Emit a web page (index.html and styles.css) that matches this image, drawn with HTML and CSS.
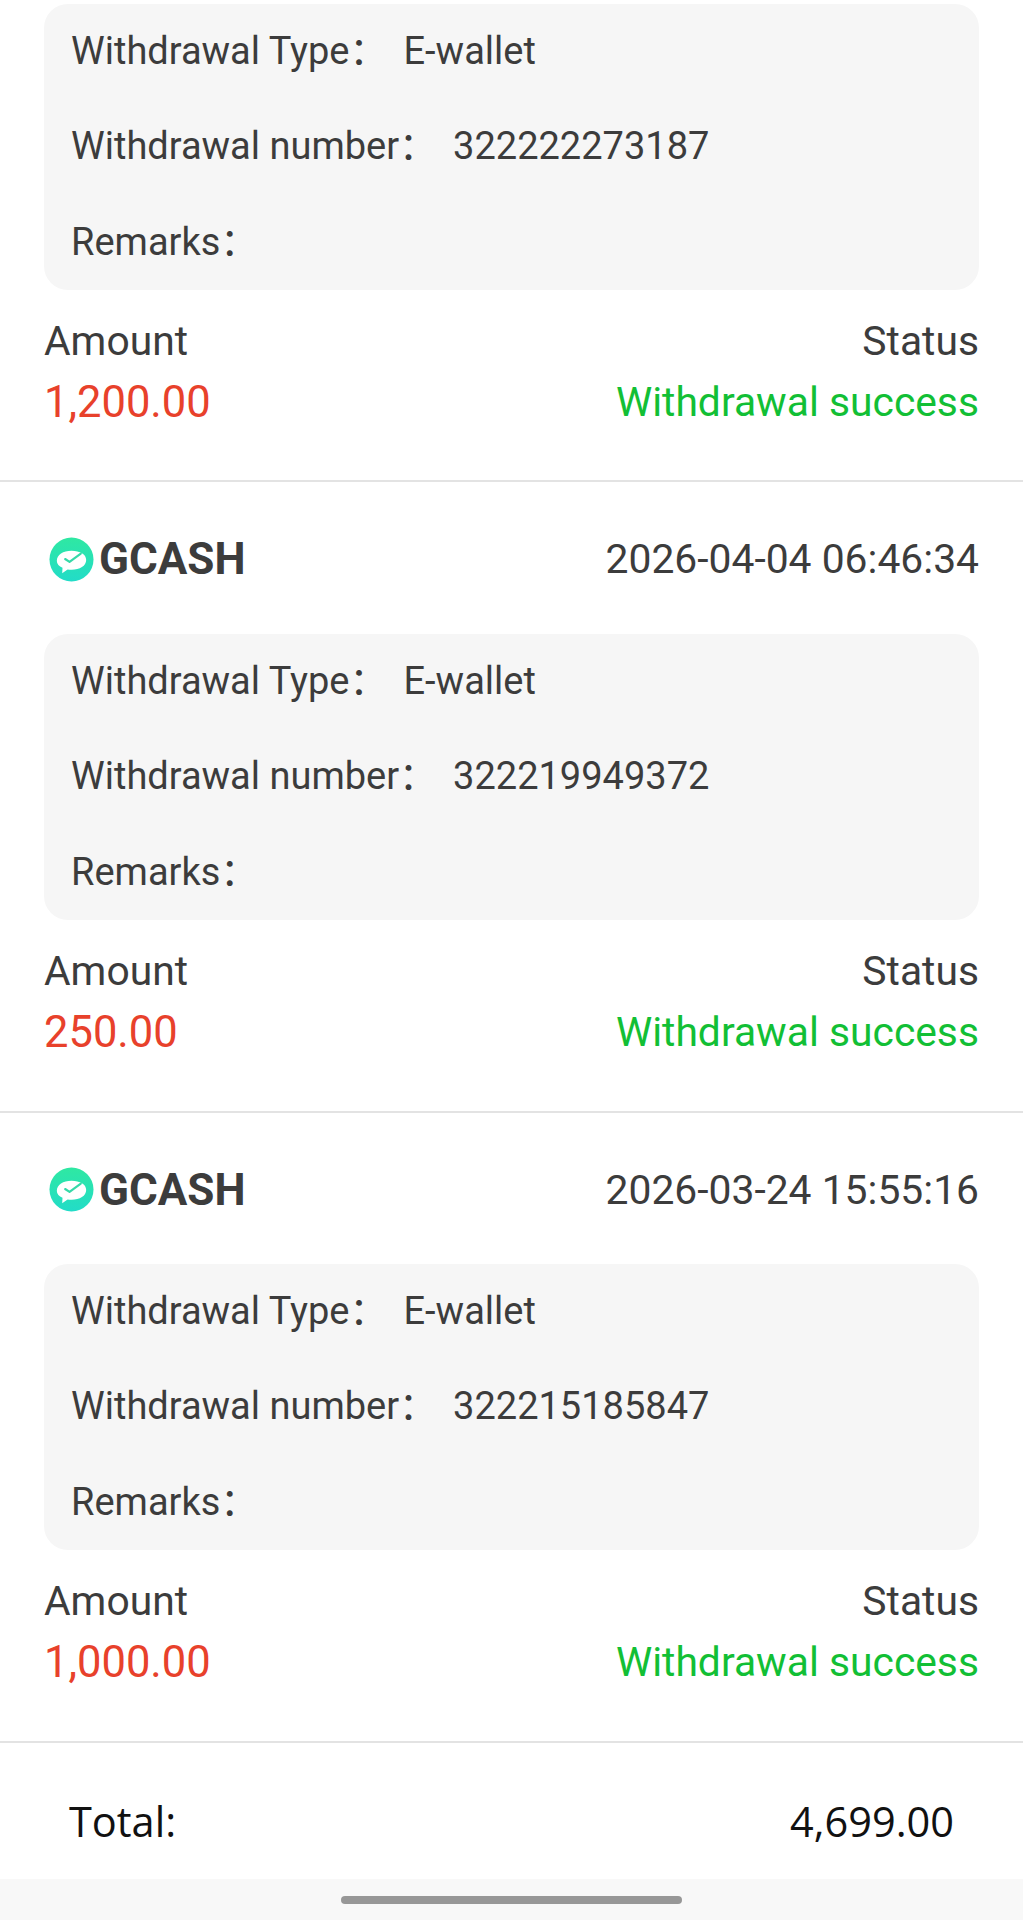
FILE: index.html
```html
<!DOCTYPE html>
<html lang="en">
<head>
    <meta charset="UTF-8">
    <meta name="viewport" content="width=device-width, initial-scale=1.0">
    <title>Withdrawal Records</title>
    <link rel="stylesheet" href="styles.css">
</head>
<body>
    <div class="records">
        <section class="record record-first">
            <div class="detail">
                <p class="detail-row">Withdrawal Type：<span class="detail-val">E-wallet</span></p>
                <p class="detail-row">Withdrawal number：<span class="detail-val">322222273187</span></p>
                <p class="detail-row">Remarks：</p>
            </div>
            <div class="summary">
                <div>
                    <p class="summary-label">Amount</p>
                    <p class="amount">1,200.00</p>
                </div>
                <div class="summary-right">
                    <p class="summary-label">Status</p>
                    <p class="status">Withdrawal success</p>
                </div>
            </div>
        </section>

        <section class="record">
            <div class="record-head">
                <div class="brand">
                    <svg class="brand-icon" viewBox="0 0 46 46">
                        <defs>
                            <linearGradient id="gcash1" x1="0" y1="0" x2="0" y2="1">
                                <stop offset="0" stop-color="#2fe8a2"/>
                                <stop offset="1" stop-color="#22dcc8"/>
                            </linearGradient>
                        </defs>
                        <circle cx="23" cy="23" r="22.5" fill="url(#gcash1)"/>
                        <path d="M8 24.500C8 18 14.500 14 23 14s15 3.500 15 9.500c0 6-6.500 10-15 10-1.400 0-2.700-.1-4-.4L13.500 37l.3-5.500C10.300 30 8 27.500 8 24.500z" fill="#fff"/>
                        <path d="M16.500 22.500l4.500 3L32.500 17" fill="none" stroke="#35d9a8" stroke-width="2.200" stroke-linecap="round" stroke-linejoin="round"/>
                    </svg>
                    <span class="brand-name">GCASH</span>
                </div>
                <span class="record-time">2026-04-04 06:46:34</span>
            </div>
            <div class="detail">
                <p class="detail-row">Withdrawal Type：<span class="detail-val">E-wallet</span></p>
                <p class="detail-row">Withdrawal number：<span class="detail-val">322219949372</span></p>
                <p class="detail-row">Remarks：</p>
            </div>
            <div class="summary">
                <div>
                    <p class="summary-label">Amount</p>
                    <p class="amount">250.00</p>
                </div>
                <div class="summary-right">
                    <p class="summary-label">Status</p>
                    <p class="status">Withdrawal success</p>
                </div>
            </div>
        </section>

        <section class="record">
            <div class="record-head">
                <div class="brand">
                    <svg class="brand-icon" viewBox="0 0 46 46">
                        <circle cx="23" cy="23" r="22.5" fill="url(#gcash1)"/>
                        <path d="M8 24.500C8 18 14.500 14 23 14s15 3.500 15 9.500c0 6-6.500 10-15 10-1.400 0-2.700-.1-4-.4L13.500 37l.3-5.500C10.300 30 8 27.500 8 24.500z" fill="#fff"/>
                        <path d="M16.500 22.500l4.500 3L32.500 17" fill="none" stroke="#35d9a8" stroke-width="2.200" stroke-linecap="round" stroke-linejoin="round"/>
                    </svg>
                    <span class="brand-name">GCASH</span>
                </div>
                <span class="record-time">2026-03-24 15:55:16</span>
            </div>
            <div class="detail">
                <p class="detail-row">Withdrawal Type：<span class="detail-val">E-wallet</span></p>
                <p class="detail-row">Withdrawal number：<span class="detail-val">322215185847</span></p>
                <p class="detail-row">Remarks：</p>
            </div>
            <div class="summary">
                <div>
                    <p class="summary-label">Amount</p>
                    <p class="amount">1,000.00</p>
                </div>
                <div class="summary-right">
                    <p class="summary-label">Status</p>
                    <p class="status">Withdrawal success</p>
                </div>
            </div>
        </section>
    </div>

    <div class="total-bar">
        <span>Total:</span>
        <span>4,699.00</span>
    </div>

    <div class="nav-bar">
        <div class="nav-pill"></div>
    </div>
</body>
</html>
```

FILE: styles.css
```css
body {
    margin: 0;
    height: 1920px;
    overflow: hidden;
    display: flex;
    flex-direction: column;
    background-color: #fff;
    font-family: Roboto, "Noto Sans CJK SC", sans-serif;
    font-size: 40.8px;
    color: #3c3c3c;
}
p {
    margin: 0;
}
.records {
    flex: 1;
}
.record {
    height: 631px;
    box-sizing: border-box;
    padding: 0 44px;
    border-bottom: 2px solid #e3e3e3;
}
.record-first {
    height: 482px;
    padding-top: 4px;
}
.record:last-child {
    height: 630px;
}
.record-head {
    height: 152px;
    box-sizing: border-box;
    padding-top: 2px;
    display: flex;
    justify-content: space-between;
    align-items: center;
}
.record:last-child .record-head {
    height: 151px;
}
.brand {
    display: flex;
    align-items: center;
    gap: 5px;
}
.brand-icon {
    width: 45px;
    height: 45px;
    margin-left: 5px;
}
.brand-name {
    font-weight: 700;
    font-size: 44px;
}
.detail {
    height: 286px;
    box-sizing: border-box;
    padding: 0 27px;
    display: flex;
    flex-direction: column;
    justify-content: space-around;
    background-color: #f6f6f6;
    border-radius: 24px;
    font-size: 38px;
}
.detail-row {
    line-height: 95px;
}
.detail-val {
    margin-left: 16px;
}
.summary {
    display: flex;
    justify-content: space-between;
    padding-top: 21px;
}
.summary-right {
    text-align: right;
}
.summary-label {
    line-height: 60px;
}
.amount {
    line-height: 63px;
    font-size: 43.5px;
    color: #e8412b;
}
.status {
    line-height: 63px;
    color: #12bf35;
}
.total-bar {
    height: 138px;
    box-sizing: border-box;
    padding: 20px 69px 0;
    display: flex;
    justify-content: space-between;
    align-items: center;
    font-family: "Open Sans", sans-serif;
    font-size: 41.5px;
    color: #111;
}
.nav-bar {
    height: 41px;
    display: flex;
    justify-content: center;
    padding-top: 17px;
    box-sizing: border-box;
    background-color: #f8f8f8;
}
.nav-pill {
    width: 341px;
    height: 8px;
    border-radius: 4px;
    background-color: #979797;
}
```
